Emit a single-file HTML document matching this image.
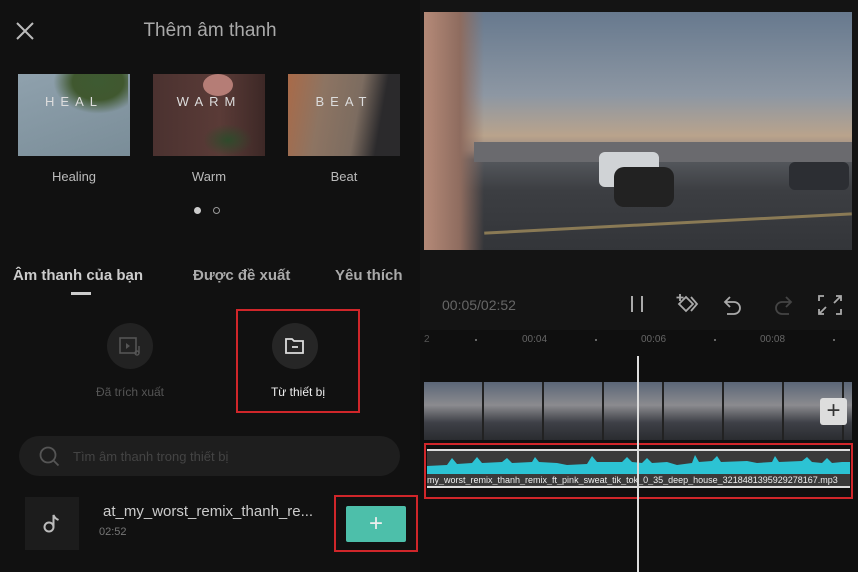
<!DOCTYPE html>
<html><head><meta charset="utf-8"><style>
*{margin:0;padding:0;box-sizing:border-box}
body{width:858px;height:572px;background:#0f0f0f;font-family:"Liberation Sans",sans-serif;position:relative;overflow:hidden;color:#ccc}
.a{position:absolute}
.thumb{position:absolute;top:74px;width:112px;height:82px;overflow:hidden}
.thumb span{position:absolute;top:20px;left:0;right:0;text-align:center;color:#ddd;font-size:13px;letter-spacing:6px}
.lbl{position:absolute;top:169px;width:112px;text-align:center;font-size:13px;color:#bbb}
</style></head><body>
<div class="a" style="left:0;top:0;width:420px;height:572px;background:#111"></div>
<svg class="a" style="left:15px;top:21px" width="20" height="20"><path d="M2 2L18 18M18 2L2 18" stroke="#bbb" stroke-width="2"/></svg>
<div class="a" style="left:0;width:420px;top:20px;text-align:center;font-size:19px;color:#aaa">Thêm âm thanh</div>
<div class="thumb" style="left:18px;background:linear-gradient(160deg,#8fa1ad,#7a8d98);"><div class="a" style="left:35px;top:0;width:75px;height:40px;background:radial-gradient(ellipse at 60% 20%,#3e5a32 0,#40582f 40%,transparent 70%)"></div><span>HEAL</span></div>
<div class="thumb" style="left:153px;background:linear-gradient(90deg,#4b3230,#5a3b37 60%,#3d2826)"><div class="a" style="left:50px;top:0;width:30px;height:22px;border-radius:50%;background:#b57d76"></div><div class="a" style="left:50px;top:50px;width:50px;height:32px;background:radial-gradient(#2f4a2b,transparent 70%)"></div><span>WARM</span></div>
<div class="thumb" style="left:288px;background:linear-gradient(100deg,#a96a48,#8d7462 30%,#7c6c60 60%,#2b2a2c 80%)"><span>BEAT</span></div>
<div class="lbl" style="left:18px">Healing</div>
<div class="lbl" style="left:153px">Warm</div>
<div class="lbl" style="left:288px">Beat</div>
<div class="a" style="left:194px;top:207px;width:7px;height:7px;border-radius:50%;background:#ccc"></div>
<div class="a" style="left:213px;top:207px;width:7px;height:7px;border-radius:50%;border:1px solid #999"></div>
<div class="a" style="left:13px;top:267px;font-size:15px;font-weight:bold;color:#ccc">Âm thanh của bạn</div>
<div class="a" style="left:193px;top:267px;font-size:15px;font-weight:bold;color:#aaa">Được đề xuất</div>
<div class="a" style="left:335px;top:267px;font-size:15px;font-weight:bold;color:#aaa">Yêu thích</div>
<div class="a" style="left:71px;top:292px;width:20px;height:3px;background:#ccc"></div>
<div class="a" style="left:107px;top:323px;width:46px;height:46px;border-radius:50%;background:#222"></div>
<svg class="a" style="left:118px;top:336px" width="26" height="22"><rect x="2" y="2" width="16" height="15" fill="none" stroke="#555" stroke-width="1.6"/><path d="M8 7l4 3-4 3z" fill="#555"/><circle cx="19" cy="17" r="2" fill="none" stroke="#555" stroke-width="1.4"/><path d="M21 17V10" stroke="#555" stroke-width="1.4"/></svg>
<div class="a" style="left:80px;top:385px;width:100px;text-align:center;font-size:12px;color:#555">Đã trích xuất</div>
<div class="a" style="left:236px;top:309px;width:124px;height:104px;border:2px solid #d0262a"></div>
<div class="a" style="left:272px;top:323px;width:46px;height:46px;border-radius:50%;background:#262626"></div>
<svg class="a" style="left:284px;top:336px" width="22" height="20"><path d="M2 3h6l2 2h9v12H2z" fill="none" stroke="#ddd" stroke-width="1.8"/><path d="M8 11h6" stroke="#ddd" stroke-width="1.8"/></svg>
<div class="a" style="left:236px;top:385px;width:124px;text-align:center;font-size:12px;color:#eee">Từ thiết bị</div>
<div class="a" style="left:19px;top:436px;width:381px;height:40px;border-radius:20px;background:#1e1e1e"></div>
<svg class="a" style="left:38px;top:445px" width="24" height="24"><circle cx="10" cy="10" r="7.5" fill="none" stroke="#555" stroke-width="1.8"/><path d="M15.5 15.5l5 5" stroke="#555" stroke-width="1.8"/></svg>
<div class="a" style="left:73px;top:449px;font-size:13px;color:#444">Tìm âm thanh trong thiết bị</div>
<div class="a" style="left:25px;top:497px;width:54px;height:53px;background:#1c1c1c"></div>
<svg class="a" style="left:42px;top:512px" width="20" height="22"><circle cx="7" cy="15" r="4.5" fill="none" stroke="#bbb" stroke-width="2"/><path d="M11.5 15V3c1 3 3 4 5 5" fill="none" stroke="#bbb" stroke-width="2"/></svg>
<div class="a" style="left:103px;top:503px;font-size:15px;color:#ccc">at_my_worst_remix_thanh_re...</div>
<div class="a" style="left:99px;top:526px;font-size:11px;color:#777">02:52</div>
<div class="a" style="left:334px;top:495px;width:84px;height:57px;border:2px solid #d0262a"></div>
<div class="a" style="left:346px;top:506px;width:60px;height:36px;background:#4dbfaa;border-radius:2px;color:#eee;font-size:24px;text-align:center;line-height:35px">+</div>

<div class="a" style="left:420px;top:0;width:438px;height:330px;background:#141414"></div>
<div class="a" style="left:424px;top:12px;width:428px;height:238px;background:linear-gradient(180deg,#67798e 0%,#8d97a3 35%,#b9a38c 52%,#9a8a80 58%,#55585d 62%,#3c3e42 75%,#333539 100%);overflow:hidden">
<div class="a" style="left:0;top:0;width:60px;height:238px;background:linear-gradient(90deg,#b58a78,#8e6c5f 60%,transparent)"></div>
<div class="a" style="left:50px;top:130px;width:378px;height:20px;background:#6a6a6e"></div>
<div class="a" style="left:175px;top:140px;width:60px;height:35px;background:#d0d3d6;border-radius:6px"></div>
<div class="a" style="left:365px;top:150px;width:60px;height:28px;background:#2c2e33;border-radius:6px"></div>
<div class="a" style="left:190px;top:155px;width:60px;height:40px;background:#222;border-radius:10px"></div>
<div class="a" style="left:60px;top:210px;width:368px;height:3px;background:#8a7a55;transform:rotate(-3deg)"></div>
</div>
<div class="a" style="left:442px;top:297px;font-size:14px;color:#666">00:05/02:52</div>
<svg class="a" style="left:626px;top:292px" width="220" height="26">
<path d="M6 4v16M16 4v16" stroke="#aaa" stroke-width="2"/>
<path d="M54 2v7M50.5 5.5h7" stroke="#aaa" stroke-width="1.8"/><path d="M53 12l7-7 7 7-7 7z M65 5l6 7-6 7" fill="none" stroke="#aaa" stroke-width="1.8"/>
<path d="M104 5l-5 5 5 5M99 10h9a6 6 0 010 12h-7" fill="none" stroke="#aaa" stroke-width="1.8"/>
<path d="M160 5l5 5-5 5M165 10h-9a6 6 0 000 12h7" fill="none" stroke="#444" stroke-width="1.8"/>
<path d="M193 9V4h5M210 4h5v5M215 17v5h-5M198 22h-5v-5M193 22l7-7M215 4l-7 7" fill="none" stroke="#aaa" stroke-width="1.8"/>
</svg>
<div class="a" style="left:420px;top:330px;width:438px;height:242px;background:#0f0f0f"></div>
<div class="a" style="left:424px;top:334px;font-size:10px;color:#555">2</div>
<div class="a" style="left:522px;top:334px;font-size:10px;color:#666">00:04</div>
<div class="a" style="left:641px;top:334px;font-size:10px;color:#666">00:06</div>
<div class="a" style="left:760px;top:334px;font-size:10px;color:#666">00:08</div>
<div class="a" style="left:475px;top:339px;width:2px;height:2px;background:#666"></div>
<div class="a" style="left:595px;top:339px;width:2px;height:2px;background:#666"></div>
<div class="a" style="left:714px;top:339px;width:2px;height:2px;background:#666"></div>
<div class="a" style="left:833px;top:339px;width:2px;height:2px;background:#666"></div>
<div class="a" style="left:424px;top:382px;width:428px;height:58px;background:repeating-linear-gradient(90deg,transparent 0 58px,#222 58px 60px),linear-gradient(180deg,#5b6677 0%,#8b8b8f 40%,#3e4047 70%,#2a2c30 100%)"></div>
<div class="a" style="left:820px;top:398px;width:27px;height:27px;background:#ddd;border-radius:3px;color:#333;font-size:24px;text-align:center;line-height:26px">+</div>
<div class="a" style="left:424px;top:443px;width:429px;height:56px;border:2px solid #d0262a"></div>
<div class="a" style="left:427px;top:449px;width:423px;height:39px;background:#3a3a3a;border-top:2px solid #ddd;border-bottom:2px solid #ddd"></div>
<svg class="a" style="left:427px;top:452px" width="423" height="24" preserveAspectRatio="none" viewBox="0 0 423 24"><path d="M0 14 L20 13 L25 6 L30 12 L45 11 L50 5 L55 11 L75 10 L80 6 L85 11 L105 10 L108 5 L112 10 L130 11 L140 13 L160 12 L165 4 L170 10 L195 10 L200 5 L205 10 L215 11 L220 6 L225 11 L240 10 L250 13 L265 11 L268 3 L272 10 L285 9 L290 4 L294 10 L320 9 L330 11 L345 10 L348 4 L352 10 L375 9 L380 5 L385 10 L395 11 L400 6 L405 11 L415 10 L423 10 L423 22 L0 22Z" fill="#2cc3d4"/></svg>
<div class="a" style="left:427px;top:475px;width:423px;font-size:9px;color:#eee;white-space:nowrap;overflow:hidden">my_worst_remix_thanh_remix_ft_pink_sweat_tik_tok_0_35_deep_house_3218481395929278167.mp3</div>
<div class="a" style="left:637px;top:356px;width:2px;height:216px;background:#ddd"></div>
</body></html>
